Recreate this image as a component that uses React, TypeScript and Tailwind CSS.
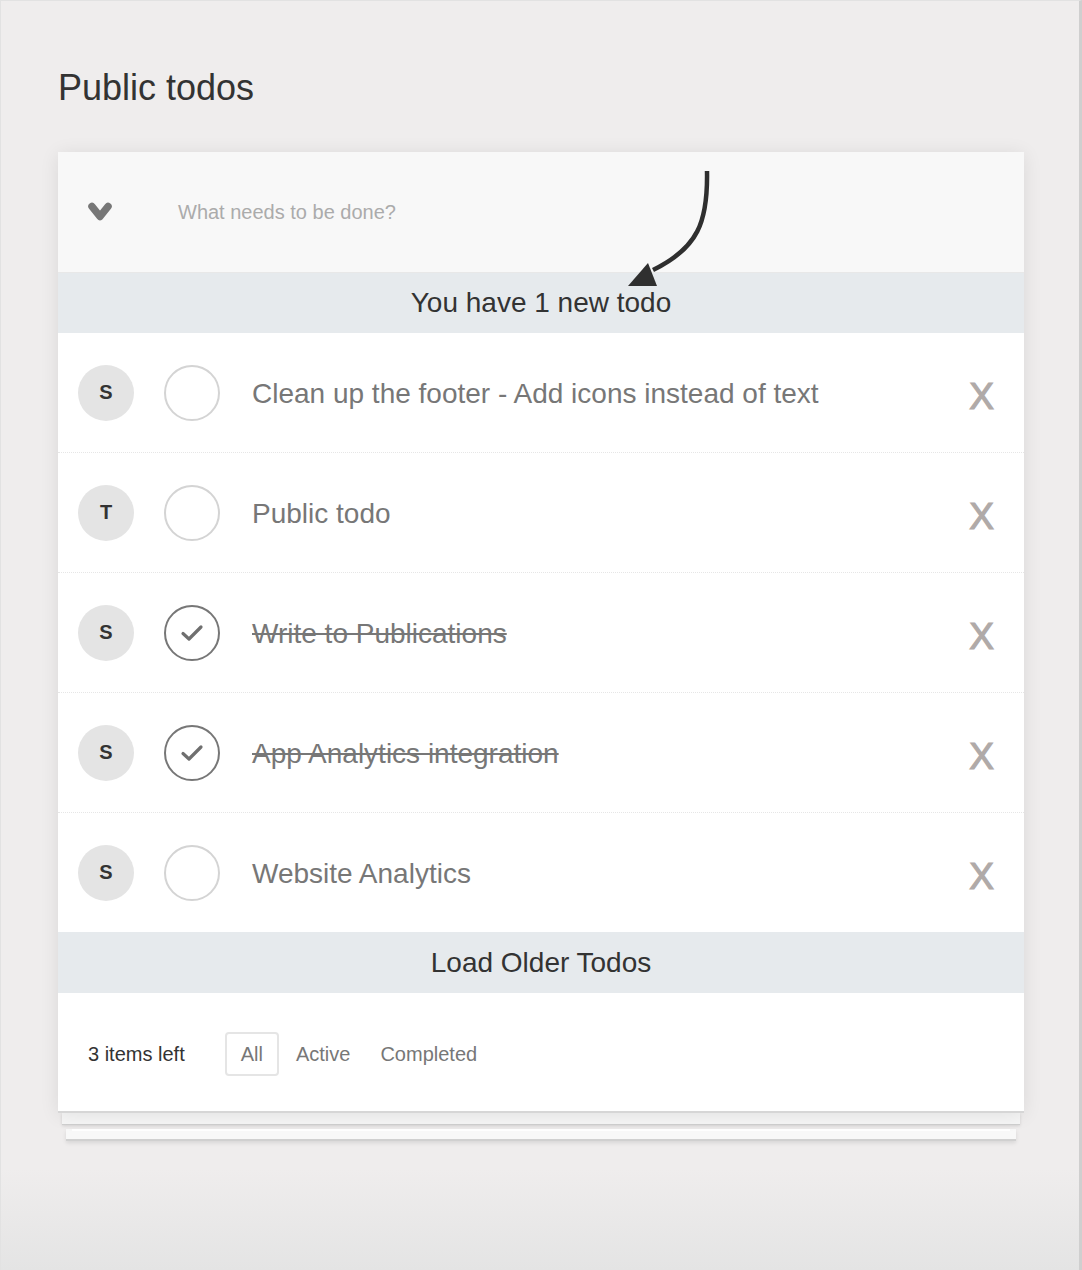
import React from "react";

type Todo = { user: string; text: string; done: boolean };

const todos: Todo[] = [
  { user: "S", text: "Clean up the footer - Add icons instead of text", done: false },
  { user: "T", text: "Public todo", done: false },
  { user: "S", text: "Write to Publications", done: true },
  { user: "S", text: "App Analytics integration", done: true },
  { user: "S", text: "Website Analytics", done: false },
];

const font = { fontFamily: '"Liberation Sans", Arial, sans-serif' };

function TodoRow({ todo }: { todo: Todo }) {
  return (
    <li className="flex h-[120px] items-center border-b border-dotted border-[#e6e6e6] bg-white pl-[20px] pr-[30px]">
      <div className="flex size-[56px] shrink-0 items-center justify-center rounded-full bg-[#e4e4e4] pb-[2px] text-[20px] font-bold text-[#333]">
        {todo.user}
      </div>
      <div
        className={
          "ml-[30px] flex size-[56px] shrink-0 items-center justify-center rounded-full border-2 " +
          (todo.done ? "border-[#777]" : "border-[#d4d4d4]")
        }
      >
        {todo.done ? (
          <svg width="28" height="28" viewBox="0 0 28 28" fill="none">
            <path d="M5 14.5 L11 20 L23 8" stroke="#6f6f6f" strokeWidth="3.2" strokeLinecap="round" strokeLinejoin="round" />
          </svg>
        ) : null}
      </div>
      <div
        className={
          "ml-[32px] flex-1 pt-[3px] text-[28px] text-[#777] " + (todo.done ? "line-through" : "")
        }
      >
        {todo.text}
      </div>
      <div className="pt-[8px] text-[37px] leading-none text-[#b0aaa8] [-webkit-text-stroke:1.2px_#b0aaa8]">X</div>
    </li>
  );
}

export default function App() {
  return (
    <div
      className="relative h-[1270px] w-[1082px] overflow-hidden border-t border-l border-r-[3px] border-t-[#e2e2e2] border-l-[#e2e2e2] border-r-[#cfcfcf] bg-[linear-gradient(to_bottom,#efeded_0%,#efeded_92%,#e4e4e4_100%)]"
      style={font}
    >
      <h1 className="pl-[57px] pt-[66px] text-[36px] leading-[42px] text-[#333]">Public todos</h1>

      <div className="relative ml-[57px] mt-[43px] w-[966px]">
        <div className="relative z-10 shadow-[0_2px_18px_rgba(0,0,0,0.09)]">
          {/* input */}
          <div className="flex h-[121px] items-center border-b border-[#e8e8e8] bg-[#f8f8f8]">
            <div className="flex w-[120px] shrink-0 items-center pl-[29px] pt-[2px]">
              <svg width="26" height="24" viewBox="0 0 26 24" fill="none">
                <path d="M5 5.5 L13 15.5 L21 5.5" stroke="#777" strokeWidth="7.5" strokeLinecap="round" strokeLinejoin="round" />
              </svg>
            </div>
            <div className="text-[20px] text-[#ababab]">What needs to be done?</div>
          </div>

          <div className="flex h-[60px] items-center justify-center bg-[#e6eaed] text-[28px] text-[#333]">
            You have 1 new todo
          </div>

          <ul>
            {todos.map((t, i) => (
              <TodoRow key={i} todo={t} />
            ))}
          </ul>

          <div className="-mt-px flex h-[61px] items-center justify-center bg-[#e6eaed] text-[28px] text-[#333]">
            Load Older Todos
          </div>

          <div className="flex h-[120px] items-center border-b-2 border-[#d6d6d6] bg-white pl-[30px] pt-[4px]">
            <span className="text-[20px] text-[#333]">3 items left</span>
            <div className="ml-[40px] flex items-center text-[20px] text-[#777]">
              <span className="rounded-[4px] border-2 border-[#e5e5e5] px-[14px] py-[5px]">All</span>
              <span className="ml-[17px]">Active</span>
              <span className="ml-[30px]">Completed</span>
            </div>
          </div>
        </div>

        {/* stacked pages */}
        <div className="mx-[4px] h-[12px] border-b border-[#cfcfcf] bg-[#f6f6f6] shadow-[0_1px_3px_rgba(0,0,0,0.12)]" />
        <div className="mx-[8px] h-[12px] border-b-2 border-[#d0d0d0] bg-[#f8f8f8] shadow-[0_2px_4px_rgba(0,0,0,0.1)]">
          <div className="mx-[6px] mt-[4px] h-[2px] bg-white" />
        </div>

        {/* arrow overlay */}
        <svg
          className="pointer-events-none absolute left-0 top-0 z-20"
          width="966"
          height="160"
          viewBox="0 0 966 160"
          fill="none"
        >
          <path d="M649 19 C 650 70, 640 96, 595 118" stroke="#2f2f2f" strokeWidth="4.5" fill="none" />
          <path d="M570 134 L599 134 L590 111 Z" fill="#2f2f2f" />
        </svg>
      </div>
    </div>
  );
}
